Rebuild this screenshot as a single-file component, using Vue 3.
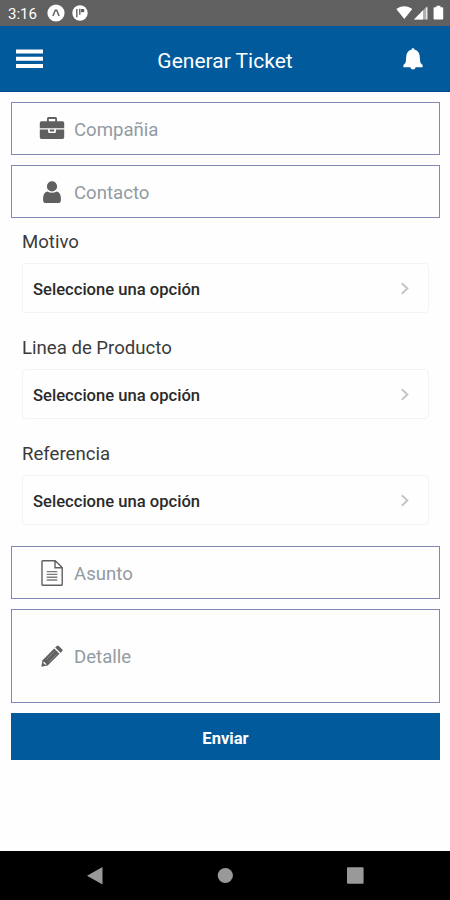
<script setup>
import { ref } from 'vue'

const contactFields = [
  { name: 'company', placeholder: 'Compañia' },
  { name: 'contact', placeholder: 'Contacto' },
]
const selects = ref([
  { label: 'Motivo', value: 'Seleccione una opción' },
  { label: 'Linea de Producto', value: 'Seleccione una opción' },
  { label: 'Referencia', value: 'Seleccione una opción' },
])
</script>

<template>
  <div class="screen">
    <div class="status">
      <span class="time">3:16</span>
      <svg class="badge" viewBox="0 0 18 18" width="18" height="18">
        <circle cx="9" cy="9" r="8.6" fill="#fff" />
        <path d="M5.900 12 8.300 6.300h1.400L12.100 12" fill="none" stroke="#606060" stroke-width="1.500" />
      </svg>
      <svg class="badge second" viewBox="0 0 16 16" width="16" height="16">
        <circle cx="8" cy="8" r="7.700" fill="#fff" />
        <path d="M4.800 4v8.200M7.800 3.800v6" fill="none" stroke="#606060" stroke-width="1.400" />
        <path d="M9 4h3.200v3.200H9z" fill="#606060" />
      </svg>
      <svg class="signals" viewBox="0 0 50 16" width="50" height="16">
        <path d="M.3 4.100C4.600.2 12 .2 16.300 4.100L8.300 14z" fill="#fff" />
        <path d="M31.300 1v13.500H18z" fill="#b0b0b0" />
        <path d="M27 5.300v9.200h-9zM30.300 2.500h1v12h-1z" fill="#fff" />
        <path d="M40.400.8h4v1.500h2q.8 0 .8.8v10.700q0 .8-.8.8h-8q-.8 0-.8-.8V3.100q0-.8.8-.8h2z" fill="#fff" />
      </svg>
    </div>

    <header class="header">
      <svg class="menu" viewBox="0 0 27 20" width="27" height="20">
        <path d="M0 .4h27v4H0zM0 7.800h27v4H0zM0 15.100h27v4H0z" fill="#fff" />
      </svg>
      <h1>Generar Ticket</h1>
      <svg class="bell" viewBox="0 0 20 22" width="20" height="22">
        <path d="M10 .3c1 0 1.500.6 1.700 1.500 3 .8 4.700 2.900 5 6.200l.4 5c.2 1.800 1 2.800 2.500 4v2.200H.4V17c1.500-1.200 2.300-2.200 2.500-4l.4-5c.3-3.300 2-5.400 5-6.200C8.500.9 9 .3 10 .3zM7.300 19h5.400c-.3 1.700-1.300 2.500-2.700 2.500s-2.400-.8-2.700-2.500z" fill="#fff" />
      </svg>
    </header>

    <main class="form">
      <label v-for="field in contactFields" :key="field.name" class="field">
        <span class="icon">
          <svg v-if="field.name === 'company'" viewBox="0 0 26 24" width="26" height="24">
            <path d="M8.900 5V1.600q0-.6.6-.6h7q.6 0 .6.600V5" fill="none" stroke="#606060" stroke-width="1.800" />
            <path d="M2.500 4.200h21Q25.200 4.200 25.200 6v5.300H.8V6q0-1.800 1.700-1.800zM.8 12.500h8.300v2.300q0 1.200 1.200 1.200h5.400q1.200 0 1.200-1.200v-2.300h8.300v7.700q0 1.800-1.700 1.800h-21Q.8 22 .8 20.200zM10.800 12.500h4.400v1.900h-4.400z" fill="#606060" />
          </svg>
          <svg v-else viewBox="0 0 18 22" width="18" height="22">
            <circle cx="9" cy="5.400" r="5.100" fill="#606060" />
            <path d="M4.300 10.400Q9 13.200 13.700 10.400 17.900 11.200 17.900 17.600v1.600Q17.900 22 15.200 22H2.800Q.1 22 .1 19.200v-1.600Q.1 11.200 4.300 10.400z" fill="#606060" />
          </svg>
        </span>
        <span class="placeholder">{{ field.placeholder }}</span>
      </label>

      <section class="selects">
        <div v-for="item in selects" :key="item.label" class="select-group">
          <div class="select-label">{{ item.label }}</div>
          <div class="select" role="button">
            <span>{{ item.value }}</span>
            <svg viewBox="0 0 10 14" width="10" height="14">
              <path d="m1.800 1.300 5.600 5.200-5.600 5.200" fill="none" stroke="#c4c4c4" stroke-width="1.900" />
            </svg>
          </div>
        </div>
      </section>

      <label class="field">
        <span class="icon">
          <svg viewBox="0 0 22 26" width="22" height="26">
            <path d="M1.800.8h12.400l7 6.800v16.800q0 .8-.8.8H1.800q-.8 0-.8-.8V1.600q0-.8.800-.8zM14 .8v6.900h7.200" fill="none" stroke="#606060" stroke-width="1.400" />
            <path d="M5.700 11.600h10.600M5.700 14.400h10.600M5.700 17.200h10.600M5.700 20h10.600" fill="none" stroke="#7c7c7c" stroke-width="1.400" />
          </svg>
        </span>
        <span class="placeholder">Asunto</span>
      </label>

      <label class="field tall">
        <span class="icon">
          <svg viewBox="0 0 22 22" width="22" height="22">
            <path d="M13.200 3.500 18.500 8.800 6.700 20.500.3 21.700l1.200-6.500z" fill="#606060" />
            <path d="m14.200 2.500 1.600-1.600q1-.9 2 0l3.300 3.300q.9 1 0 2l-1.600 1.600z" fill="#606060" />
            <path d="m2.700 16.400 2.900 2.900-1.500.4-1.800-1.800z" fill="#fefefe" />
            <path d="m5.500 14.500 8-8M8 16.800l8-8" stroke="#989898" stroke-width=".8" />
          </svg>
        </span>
        <span class="placeholder">Detalle</span>
      </label>

      <button class="submit" type="button">Enviar</button>
    </main>

    <nav class="nav">
      <svg viewBox="0 0 18 20" width="18" height="20"><path d="M16.500 1v17.500L1 9.700z" fill="#999" /></svg>
      <svg viewBox="0 0 18 20" width="18" height="20"><circle cx="9.300" cy="9.500" r="7.600" fill="#999" /></svg>
      <svg viewBox="0 0 18 20" width="18" height="20"><rect x="1" y="1.200" width="16.600" height="16.600" rx="1" fill="#999" /></svg>
    </nav>
  </div>
</template>

<style>
body {
  background: #fefefe;
}
</style>

<style scoped>
.screen {
  width: 450px;
  height: 900px;
  display: flex;
  flex-direction: column;
  overflow: hidden;
  background: #fefefe;
  font-family: Roboto, sans-serif;
}
.status {
  height: 26px;
  flex: none;
  display: flex;
  align-items: center;
  box-sizing: border-box;
  padding: 0 4px 0 8px;
  background: #606060;
  color: #fff;
}
.time {
  width: 39px;
  padding-top: 1px;
  font-size: 15px;
  font-weight: 400;
}
.second {
  margin-left: 7px;
}
.signals {
  margin-left: auto;
}
.header {
  height: 66px;
  flex: none;
  box-sizing: border-box;
  display: grid;
  grid-template-columns: 60px 1fr 60px;
  align-items: center;
  background: #005a9c;
  border-bottom: 1px solid #064a8c;
}
.menu {
  margin-left: 16px;
}
.header h1 {
  margin: 4px 0 0;
  font-size: 21px;
  font-weight: 400;
  line-height: 26px;
  color: #fff;
  text-align: center;
}
.bell {
  margin-left: 13px;
}
.form {
  flex: 1;
  display: flex;
  flex-direction: column;
  padding: 10px 10px 0 11px;
}
.field {
  height: 53px;
  flex: none;
  box-sizing: border-box;
  display: flex;
  align-items: center;
  margin-bottom: 10px;
  padding-left: 27px;
  border: 1px solid #8089b3;
}
.field.tall {
  height: 94px;
}
.icon {
  width: 26px;
  display: flex;
  justify-content: center;
}
.placeholder {
  margin-left: 9px;
  padding-top: 2px;
  font-size: 18.600px;
  color: #929ba1;
}
.selects {
  padding: 0 11px;
  height: 318px;
  flex: none;
}
.select-group {
  height: 106.200px;
}
.select-label {
  height: 35px;
  line-height: 28px;
  font-size: 18.600px;
  color: #3b3b3b;
}
.select {
  height: 50px;
  box-sizing: border-box;
  display: flex;
  align-items: center;
  justify-content: space-between;
  padding: 2px 18px 0 10px;
  border: 1px solid #f3f3f3;
  border-radius: 4px;
  font-size: 16.600px;
  font-weight: 500;
  color: #2a2a2a;
}
.submit {
  height: 47px;
  flex: none;
  border: 0;
  padding: 3px 0 0;
  background: #005a9c;
  color: #fff;
  font: 700 16.600px Roboto, sans-serif;
}
.nav {
  height: 49px;
  flex: none;
  box-sizing: border-box;
  display: flex;
  align-items: center;
  justify-content: space-between;
  padding: 0 86px;
  background: #000;
}
</style>
